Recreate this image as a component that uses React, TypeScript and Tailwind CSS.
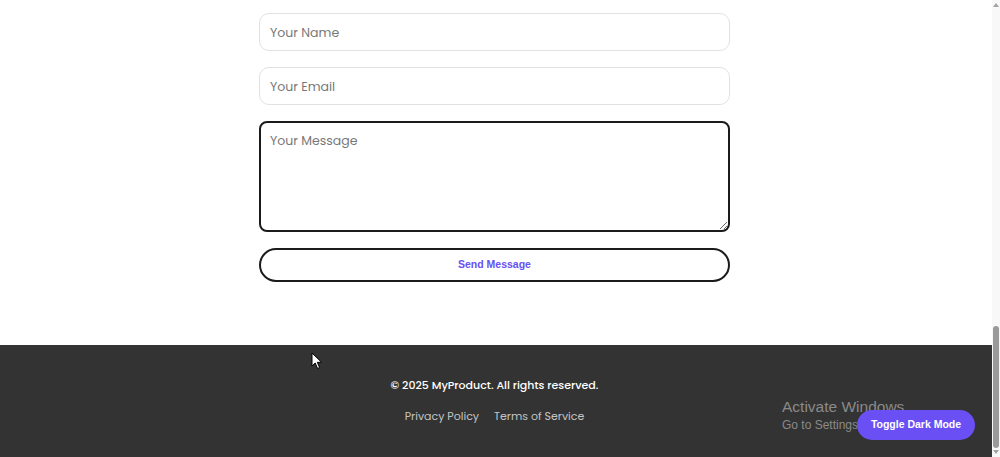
import { useState } from "react";

const poppins = "font-['Poppins','Open_Sans','Noto_Sans',sans-serif]";
const arial = "font-['Liberation_Sans',Arial,sans-serif]";

function Field({ placeholder }: { placeholder: string }) {
  return (
    <input
      type="text"
      placeholder={placeholder}
      className={`h-[38px] w-full rounded-[10px] border border-[#e2e2e2] bg-white px-[10px] pt-[2px] text-[12.5px] text-[#333] placeholder:text-[#777] outline-none ${poppins}`}
    />
  );
}

function Cursor() {
  return (
    <svg width="12" height="18" viewBox="0 0 12 18" className="absolute left-[311px] top-[7px]">
      <path d="M1 1 L1 14 L4.2 11 L6.6 16.5 L8.6 15.6 L6.3 10.3 L10.6 10.3 Z" fill="#fff" stroke="#000" strokeWidth="1" strokeLinejoin="round" />
    </svg>
  );
}

function Scrollbar() {
  return (
    <div className="flex h-full w-[8px] flex-col items-center bg-[#f8f8f8]">
      <svg width="8" height="8" viewBox="0 0 8 8" className="mt-[1px]">
        <path d="M1 6 L4 2 L7 6 Z" fill="#a3a3a3" />
      </svg>
      <div className="flex-1" />
      <div className="h-[122px] w-[6px] rounded-full bg-[#9a9a9a]" />
      <svg width="8" height="8" viewBox="0 0 8 8" className="mb-[1px]">
        <path d="M1 2 L4 6 L7 2 Z" fill="#a3a3a3" />
      </svg>
    </div>
  );
}

export default function App() {
  const [dark, setDark] = useState(false);

  return (
    <div className="flex h-[457px] w-[1000px] overflow-hidden bg-white">
      <div className="flex h-full flex-1 flex-col">
        {/* Contact form */}
        <main className="flex flex-col items-center pr-[3px] pt-[13px]">
          <form className="flex w-[471px] flex-col gap-[16px]" onSubmit={(e) => e.preventDefault()}>
            <Field placeholder="Your Name" />
            <Field placeholder="Your Email" />
            <textarea
              placeholder="Your Message"
              className={`h-[111px] w-full rounded-[8px] border-2 border-[#1b1b1b] bg-white px-[9px] pt-[9px] pb-[8px] text-[12.5px] text-[#333] placeholder:text-[#777] outline-none ${poppins}`}
            />
            <button
              type="submit"
              className={`h-[34px] w-full rounded-full border-2 border-[#1b1b1b] bg-white text-[10.5px] font-bold text-[#6a4ff5] ${arial}`}
            >
              Send Message
            </button>
          </form>
        </main>

        {/* Footer */}
        <footer className={`relative mt-[63px] flex flex-1 flex-col items-center bg-[#333333] pr-[3px] pt-[32px] ${poppins}`}>
          <Cursor />
          <p className="text-[11px] font-medium text-white">© 2025 MyProduct. All rights reserved.</p>
          <nav className="mt-[14px] flex gap-[15px] text-[11px] text-[#c4c4c4]">
            <a href="#">Privacy Policy</a>
            <a href="#">Terms of Service</a>
          </nav>
          <div className="absolute left-[782px] top-[52px] font-['Liberation_Sans',sans-serif] text-[#8a8a8a]">
            <div className="text-[15.5px] leading-[20px]">Activate Windows</div>
            <div className="text-[12px] leading-[16px]">Go to Settings to activate Windows.</div>
          </div>
        </footer>
      </div>

      <Scrollbar />

      <button
        onClick={() => setDark(!dark)}
        className={`fixed bottom-[17px] right-[25px] h-[30px] w-[118px] rounded-full bg-[#6a4ff5] text-[10.5px] font-bold text-white ${arial}`}
      >
        Toggle Dark Mode
      </button>
    </div>
  );
}
